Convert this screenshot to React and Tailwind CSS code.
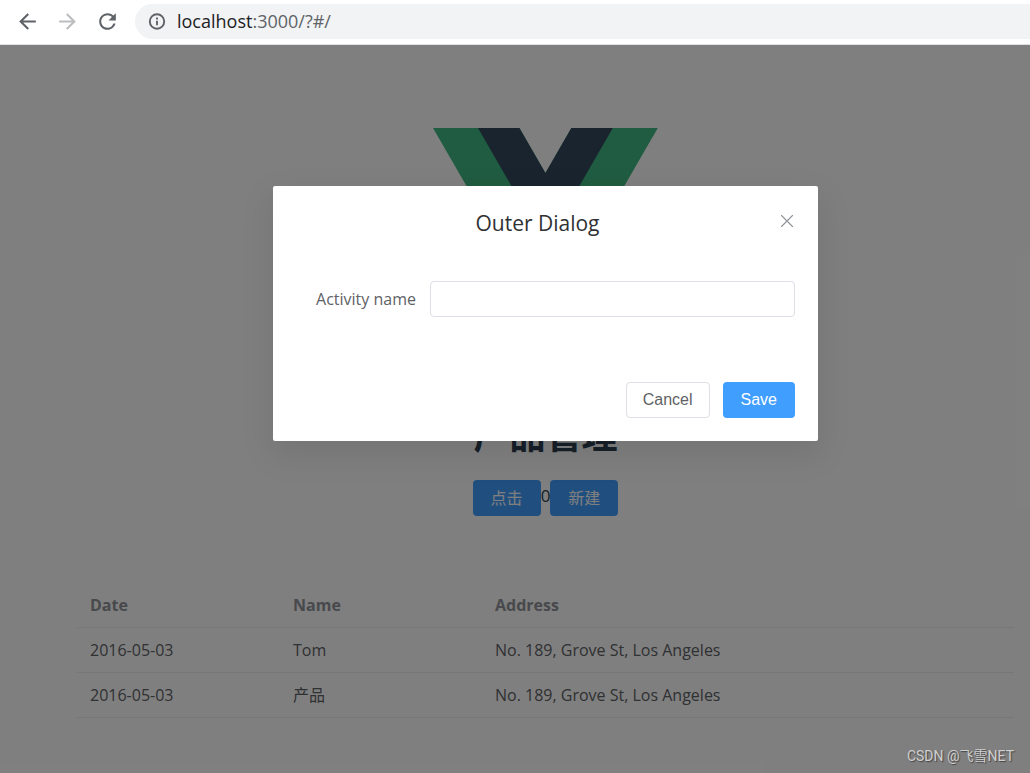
import { useState } from "react";
import { MdArrowBack, MdArrowForward, MdRefresh } from "react-icons/md";

const rows = [
  { id: 1, date: "2016-05-03", name: "Tom", address: "No. 189, Grove St, Los Angeles" },
  { id: 2, date: "2016-05-03", name: "产品", address: "No. 189, Grove St, Los Angeles" },
];

function InfoIcon() {
  return (
    <svg className="size-5" viewBox="0 0 20 20" fill="none" stroke="currentColor" strokeWidth="1.9" aria-hidden="true">
      <circle cx="10" cy="9.5" r="7.2" />
      <path d="M10 8.7v4.6M10 5.6v1.9" />
    </svg>
  );
}

function BrowserBar() {
  return (
    <header className="flex h-[45px] shrink-0 items-center border-b border-[#dee1e6] bg-white pb-px pl-[15px] text-[#5f6368]">
      <nav className="flex gap-[15px] pb-px" aria-label="Browser">
        <button type="button" aria-label="Back"><MdArrowBack size={25} /></button>
        <button type="button" aria-label="Forward" className="text-[#bbbdbf]"><MdArrowForward size={25} /></button>
        <button type="button" aria-label="Reload"><MdRefresh size={25} /></button>
      </nav>
      <div className="ml-[15px] flex h-[35px] flex-1 items-center gap-[10px] rounded-l-full bg-[#f1f3f4] pl-3">
        <InfoIcon />
        <p className="pb-0.5 text-lg">
          <span className="text-[#202124]">localhost</span>:3000/?#/
        </p>
      </div>
    </header>
  );
}

function VueLogo() {
  return (
    <svg className="w-[225px]" viewBox="0 0 262 227" role="img" aria-label="Vue">
      <path fill="#41b883" d="M161.1 0 130.9 52.35 100.65 0H0l130.9 226.7L261.75 0z" />
      <path fill="#34495e" d="M161.1 0 130.9 52.35 100.65 0h-48.3l78.55 136L209.4 0z" />
    </svg>
  );
}

function PrimaryButton({ children, ...rest }) {
  return (
    <button type="button" className="h-9 rounded bg-[#409eff] px-[18px] text-base text-white" {...rest}>
      {children}
    </button>
  );
}

function Dialog({ onClose }) {
  return (
    <section
      role="dialog"
      aria-modal="true"
      aria-labelledby="dialog-title"
      className="w-[545px] rounded-xs bg-white px-[23px] pt-[23px] pb-[23px] shadow-[0_12px_32px_4px_rgba(0,0,0,0.08)]"
    >
      <div className="flex items-start">
        <h2 id="dialog-title" className="flex-1 text-center text-[21px] leading-7 text-[#303133]">Outer Dialog</h2>
        <button type="button" aria-label="Close" onClick={onClose} className="py-1 text-[#909399]">
          <svg className="size-4" viewBox="0 0 16 16" fill="none" stroke="currentColor" strokeWidth="1.1" strokeLinecap="round">
            <path d="M2.5 2.5l11 11M13.5 2.5l-11 11" />
          </svg>
        </button>
      </div>
      <div className="mt-11 flex items-center">
        <label htmlFor="activity" className="w-[134px] pr-[14px] text-right text-base text-[#606266]">Activity name</label>
        <input id="activity" type="text" className="h-9 min-w-0 flex-1 rounded border border-[#dcdfe6] px-3 text-base outline-none" />
      </div>
      <div className="mt-[65px] flex justify-end gap-[13px] font-['Liberation_Sans',sans-serif]">
        <button type="button" onClick={onClose} className="h-9 rounded border border-[#dcdfe6] px-4 text-base text-[#606266]">Cancel</button>
        <PrimaryButton onClick={onClose}>Save</PrimaryButton>
      </div>
    </section>
  );
}

export default function App() {
  const [open, setOpen] = useState(true);
  const [count, setCount] = useState(0);

  return (
    <div className="flex min-h-screen flex-col bg-white font-['Open_Sans','Noto_Sans_CJK_SC',sans-serif]">
      <BrowserBar />
      <main className="relative flex flex-1 flex-col items-center pt-[83px] pr-4 pb-14 pl-[77px] text-[#2c3e50]">
        <VueLogo />
        <h1 className="mt-[86px] text-4xl leading-[54px] font-bold">产品管理</h1>
        <div className="mt-[17px] flex items-start text-[17px] leading-8">
          <PrimaryButton onClick={() => setCount(count + 1)}>点击</PrimaryButton>
          <span>{count}</span>
          <PrimaryButton onClick={() => setOpen(true)}>新建</PrimaryButton>
        </div>
        <table className="mt-[67px] w-full table-fixed text-left text-base text-[#606266]">
          <thead>
            <tr className="h-[45px] border-b border-[#ebeef5] text-[#909399]">
              <th scope="col" className="w-[203px] px-[13px]">Date</th>
              <th scope="col" className="w-[202px] px-[13px]">Name</th>
              <th scope="col" className="px-[13px]">Address</th>
            </tr>
          </thead>
          <tbody>
            {rows.map((row) => (
              <tr key={row.id} className="h-[45px] border-b border-[#ebeef5]">
                <td className="px-[13px]">{row.date}</td>
                <td className="px-[13px]">{row.name}</td>
                <td className="px-[13px]">{row.address}</td>
              </tr>
            ))}
          </tbody>
        </table>
        {open && (
          <div className="absolute inset-0 flex items-start justify-center bg-black/50 pt-[141px] pr-4 pl-[77px]">
            <Dialog onClose={() => setOpen(false)} />
          </div>
        )}
        <p className="absolute right-4 bottom-2 font-[Roboto,'Noto_Sans_CJK_SC',sans-serif] text-sm text-[#cfcfcf] [text-shadow:1px_1px_1px_#444]">
          CSDN @飞雪NET
        </p>
      </main>
    </div>
  );
}
